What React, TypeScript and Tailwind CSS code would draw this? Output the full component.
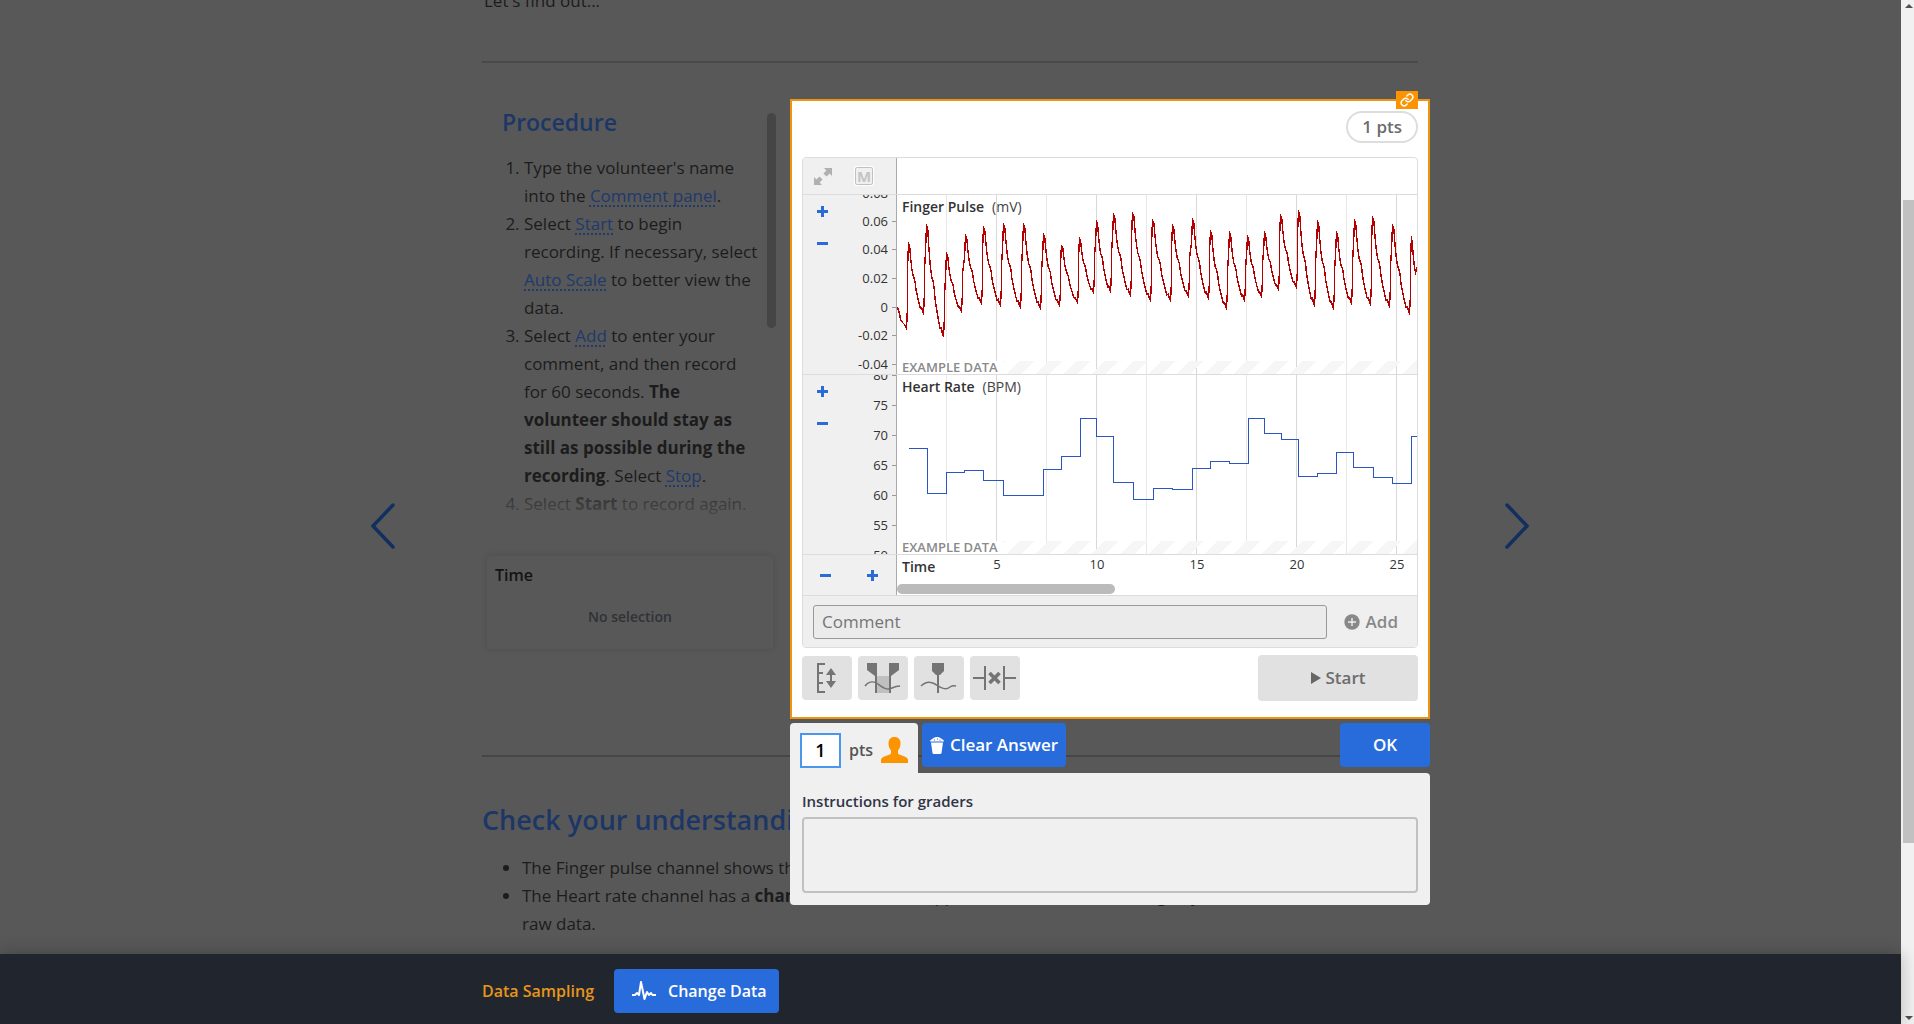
import { useState } from 'react'
import type { ReactNode } from 'react'
import { Link as LinkIcon } from 'lucide-react'

const PLOT_WIDTH = 521
const PLOT_HEIGHT = 179

// [trough x, trough y, peak x, peak y] for every heart beat
const BEATS = [
  [9, 133, 11, 48],
  [26, 118, 29, 30],
  [46, 141, 49, 58],
  [64, 116, 68, 40],
  [84, 108, 86, 32],
  [103, 110, 106, 29],
  [123, 112, 126, 29],
  [143, 113, 146, 39],
  [162, 110, 164, 50],
  [180, 107, 182, 43],
  [196, 97, 199, 26],
  [213, 96, 216, 19],
  [233, 100, 235, 18],
  [253, 105, 255, 25],
  [273, 105, 275, 30],
  [291, 101, 295, 24],
  [311, 103, 313, 36],
  [329, 113, 332, 37],
  [347, 105, 350, 41],
  [364, 101, 367, 37],
  [381, 94, 383, 20],
  [399, 92, 401, 16],
  [417, 110, 420, 26],
  [436, 113, 439, 37],
  [454, 108, 457, 25],
  [473, 109, 475, 22],
  [492, 111, 495, 30],
  [512, 118, 514, 41],
]

// Fall of one beat: share of the time and share of the drop
const DECAY = [
  [0.07, 0.02],
  [0.14, 0.2],
  [0.22, 0.36],
  [0.3, 0.46],
  [0.38, 0.5],
  [0.44, 0.55],
  [0.5, 0.66],
  [0.6, 0.76],
  [0.7, 0.85],
  [0.8, 0.93],
  [0.88, 0.92],
  [0.94, 0.98],
]

// [x, y] where each heart rate step begins
const RATE_STEPS = [
  [11, 73],
  [30, 118],
  [49, 97],
  [67, 95],
  [86, 105],
  [106, 120],
  [146, 94],
  [164, 81],
  [183, 43],
  [199, 61],
  [216, 107],
  [236, 124],
  [256, 113],
  [275, 114],
  [295, 93],
  [313, 86],
  [332, 88],
  [351, 43],
  [367, 58],
  [384, 64],
  [401, 101],
  [420, 98],
  [439, 77],
  [456, 92],
  [476, 102],
  [495, 108],
  [514, 61],
]

function pulsePath() {
  let d = 'M0 112 L2 118 L3 124 L5 127 L7 129 L8 131'
  BEATS.forEach(([tx, ty, px, py], i) => {
    const rise = ty - py
    d += ` L${tx} ${ty} L${tx + 1} ${ty - rise * 0.25} L${tx + 1} ${ty - rise * 0.5} L${px - 1} ${py + rise * 0.3} L${px} ${py}`
    const next = BEATS[i + 1]
    if (!next) return
    DECAY.forEach(([t, f]) => {
      d += ` L${px + (next[0] - px) * t} ${py + (next[1] - py) * f}`
    })
  })
  return d + ' L516 62 L517 72 L518 77 L519 74 L520 77'
}

function ratePath() {
  const [first, ...rest] = RATE_STEPS
  return `M${first[0]} ${first[1]}` + rest.map(([x, y]) => ` H${x} V${y}`).join('') + ` H${PLOT_WIDTH}`
}

function Term({ children }: { children: ReactNode }) {
  return (
    <a
      href="#"
      className="text-[#203a6c] underline decoration-dotted decoration-2 underline-offset-3 [text-decoration-skip-ink:none]"
    >
      {children}
    </a>
  )
}

function PlusMinus({ kind, label }: { kind: 'plus' | 'minus'; label: string }) {
  return (
    <button aria-label={label} className="block">
      <svg width="11" height="11" viewBox="0 0 11 11" fill="#2a6bd6">
        <rect x="0" y="4" width="11" height="3" />
        {kind === 'plus' && <rect x="4" y="0" width="3" height="11" />}
      </svg>
    </button>
  )
}

interface ChannelProps {
  title: string
  unit: string
  ticks: { label: string; y: number }[]
  path: string
  color: string
  strokeWidth: number
}

function Channel({ title, unit, ticks, path, color, strokeWidth }: ChannelProps) {
  return (
    <div className="flex h-[180px] border-b border-[#dcdcdc]">
      <div className="relative w-[94px] shrink-0 overflow-hidden border-r border-[#aaa] bg-[#f0f0f0]">
        <div className="flex flex-col gap-[21px] pt-[11px] pl-[14px]">
          <PlusMinus kind="plus" label={`Zoom in ${title}`} />
          <PlusMinus kind="minus" label={`Zoom out ${title}`} />
        </div>
        <svg className="absolute inset-y-0 right-0" width="93" height={PLOT_HEIGHT}>
          {ticks.map(({ label, y }) => (
            <g key={label}>
              <text x="85" y={y + 5} textAnchor="end" fontSize="13" fill="#333">
                {label}
              </text>
              <rect x="89" y={y} width="4" height="1" fill="#999" />
            </g>
          ))}
        </svg>
      </div>
      <div className="relative min-w-0 flex-1 overflow-hidden">
        <svg className="block" width={PLOT_WIDTH} height={PLOT_HEIGHT}>
          {[1, 2, 3, 4, 5, 6, 7, 8, 9, 10].map(n => (
            <rect key={n} x={n * 50 - 1} y="0" width="1" height={PLOT_HEIGHT} fill={n % 2 ? '#e8e8e8' : '#d8d8d8'} />
          ))}
          <path
            d={path}
            transform="translate(0.5 0.5)"
            fill="none"
            stroke={color}
            strokeWidth={strokeWidth}
            shapeRendering="crispEdges"
          />
        </svg>
        <div className="absolute top-0 left-[5px] flex gap-2 text-[14px] leading-6 text-[#444]">
          <span className="font-semibold text-[#333]">{title}</span>
          <span>{unit}</span>
        </div>
        <div className="absolute inset-x-0 bottom-0 flex h-[13px] items-center">
          <span className="bg-white px-[5px] text-[13px] leading-[13px] font-semibold text-[#8a8a8a]">EXAMPLE DATA</span>
          <span className="h-full flex-1 bg-[repeating-linear-gradient(-45deg,#f6f6f6_0_10px,transparent_10px_20px)]" />
        </div>
      </div>
    </div>
  )
}

function ToolButton({ label, children }: { label: string; children: ReactNode }) {
  return (
    <button aria-label={label} className="flex h-11 w-[50px] items-center justify-center rounded bg-[#e1e1e1]">
      <svg width="50" height="44" viewBox="0 0 50 44" fill="none" stroke="#747474" strokeWidth="2">
        {children}
      </svg>
    </button>
  )
}

function ChartPanel() {
  return (
    <div className="overflow-hidden rounded border border-[#dcdcdc] bg-white">
      <div className="flex h-[37px] border-b border-[#dcdcdc]">
        <div className="flex w-[94px] items-center gap-[23px] border-r border-[#aaa] bg-[#f0f0f0] pl-[11px]">
          <button aria-label="Expand">
            <svg width="18" height="17" viewBox="0 0 18 17" fill="#b0b0b0">
              <path d="M10 0h8v8l-2.400-2.400-3 3-3.200-3.200 3-3z" />
              <path d="M8 17H0V9l2.400 2.400 3-3 3.200 3.200-3 3z" />
            </svg>
          </button>
          <button
            aria-label="Markers"
            className="flex size-[18px] items-center justify-center rounded-[2px] border border-[#c0c0c0] text-[15px] leading-none font-bold text-[#c4c4c4] outline outline-white"
          >
            M
          </button>
        </div>
      </div>

      <Channel
        title="Finger Pulse"
        unit="(mV)"
        color="#b30000"
        strokeWidth={1.4}
        path={pulsePath()}
        ticks={[
          { label: '0.08', y: -2 },
          { label: '0.06', y: 26 },
          { label: '0.04', y: 54 },
          { label: '0.02', y: 83 },
          { label: '0', y: 112 },
          { label: '-0.02', y: 140 },
          { label: '-0.04', y: 169 },
        ]}
      />
      <Channel
        title="Heart Rate"
        unit="(BPM)"
        color="#2c55c4"
        strokeWidth={1}
        path={ratePath()}
        ticks={[
          { label: '80', y: 0 },
          { label: '75', y: 30 },
          { label: '70', y: 60 },
          { label: '65', y: 90 },
          { label: '60', y: 120 },
          { label: '55', y: 150 },
          { label: '50', y: 180 },
        ]}
      />

      <div className="flex h-[41px] border-b border-[#dcdcdc]">
        <div className="flex w-[94px] shrink-0 items-center gap-9 border-r border-[#aaa] bg-[#f0f0f0] pl-[17px]">
          <PlusMinus kind="minus" label="Zoom out time" />
          <PlusMinus kind="plus" label="Zoom in time" />
        </div>
        <div className="flex min-w-0 flex-1 flex-col justify-between overflow-hidden pb-px">
          <div className="flex">
            <span className="w-[75px] shrink-0 pl-[5px] text-[14px] leading-6 font-semibold text-[#333]">Time</span>
            {[5, 10, 15, 20, 25].map(t => (
              <span key={t} className="w-[100px] shrink-0 text-[13px] leading-[18px] text-[#333]">
                <span className="block w-[50px] text-center">{t}</span>
              </span>
            ))}
          </div>
          <div className="h-[10px] w-[218px] rounded-full bg-[#bbb]" />
        </div>
      </div>

      <div className="flex items-center gap-[17px] bg-[#efefef] pt-[9px] pr-[19px] pb-2 pl-[10px]">
        <input
          aria-label="Comment"
          placeholder="Comment"
          className="h-[34px] min-w-0 flex-1 rounded-[3px] border border-[#999] bg-[#ebebeb] px-2 pb-[2px] text-[17px] placeholder:text-[#757575]"
        />
        <button className="flex items-center gap-[6px] text-[17px] font-semibold text-[#888]">
          <svg width="16" height="16" viewBox="0 0 16 16">
            <circle cx="8" cy="8" r="7.700" fill="#888" />
            <path d="M8 4v8M4 8h8" stroke="#efefef" strokeWidth="1.400" />
          </svg>
          Add
        </button>
      </div>
    </div>
  )
}

function Toolbar() {
  return (
    <div className="mt-[7px] flex items-center gap-[6px]">
      <ToolButton label="Auto Scale">
        <path d="M23 8h-7v28h7M16 17h5M16 27h5" />
        <path d="M29 16v12" />
        <path d="M29 12l5 7H24zM29 32l5-7H24z" fill="#747474" stroke="none" />
      </ToolButton>
      <ToolButton label="Selection">
        <rect x="19" y="20" width="12" height="17" fill="#c0c0c0" stroke="none" />
        <path d="M9 7h10v13h-2l-8-6zM31 7h10v7l-8 6h-2z" fill="#747474" stroke="none" />
        <path d="M18 7v30M32 7v30" />
        <path d="M7 30c4-5 9-5 13-2s9 7 14 4q4-2 8-2" strokeWidth="1.500" />
      </ToolButton>
      <ToolButton label="Marker">
        <path d="M18 7h12v8l-4 4h-4l-4-4z" fill="#747474" stroke="none" />
        <path d="M24 18v19" />
        <path d="M7 30c5-5 9-5 14-2s10 7 15 3q3-2 6-1" strokeWidth="1.500" />
      </ToolButton>
      <ToolButton label="Delete selection">
        <path d="M15 10v24M34 10v24M3 22h12M34 22h12" />
        <path d="M19.500 17l10 10M29.500 17l-10 10" strokeWidth="3.600" />
      </ToolButton>
      <button className="ml-auto flex h-[46px] w-40 items-center justify-center gap-[5px] rounded bg-[#e1e1e1] pb-px text-[17px] font-semibold text-[#6c6c6c]">
        <svg width="10" height="12" viewBox="0 0 10 12" fill="#666">
          <path d="M0 0l10 6-10 6z" />
        </svg>
        Start
      </button>
    </div>
  )
}

function GradingPanel() {
  const [points, setPoints] = useState('1')

  return (
    <div className="absolute top-full -right-[2px] -left-[2px] mt-[6px]">
      <div className="flex items-start">
        <div className="flex h-[50px] w-32 items-center rounded-t bg-[#f0f0f0] pt-1 pl-[10px]">
          <input
            id="points"
            value={points}
            onChange={e => setPoints(e.target.value)}
            className="h-[35px] w-[41px] border-2 border-[#4a98ee] bg-white text-center text-[18px] font-semibold text-black outline-none"
          />
          <label htmlFor="points" className="pl-2 text-[16px] font-semibold text-[#555]">
            pts
          </label>
          <svg className="ml-2" width="27" height="26" viewBox="0 0 27 26" fill="#fb9400">
            <path d="M13.500 0c4 0 6 2.500 6 6.500 0 3-1 5-2.500 7v3c1 2 9 2.500 10 6V26H0v-3.500c1-3.500 9-4 10-6v-3c-1.500-2-2.500-4-2.500-7C7.500 2.500 9.500 0 13.500 0z" />
          </svg>
        </div>
        <button className="ml-1 flex h-11 w-36 items-center justify-center gap-[6px] rounded bg-[#286cdc] text-[17px] font-semibold text-white">
          <svg width="14" height="17" viewBox="0 0 14 17" fill="#fff">
            <path d="M1 5.500h12L11.500 16q-.2 1-1.200 1H3.700q-1 0-1.200-1z" />
            <path d="M0 4.500C0 2.500 2 2.500 3 1.500S5.500 0 7 0s3 .5 4 1.500 3 1 3 3z" />
            <path d="M4 3h1M7 2h1M9.500 3.200h1" stroke="#286cdc" />
          </svg>
          Clear Answer
        </button>
        <button className="ml-auto h-11 w-[90px] rounded bg-[#286cdc] text-[17px] font-semibold text-white">OK</button>
      </div>
      <div className="flex flex-col rounded-r rounded-bl bg-[#f0f0f0] px-3 pt-[18px] pb-3">
        <label htmlFor="instructions" className="text-[15px] leading-5 font-semibold text-[#2f3447]">
          Instructions for graders
        </label>
        <textarea
          id="instructions"
          className="mt-[6px] h-[76px] resize-none rounded border-2 border-[#c0c2c2] bg-[#f0f0f0] p-2 outline-none"
        />
      </div>
    </div>
  )
}

function Procedure() {
  return (
    <div className="pt-[7px]">
      <div className="flex justify-between pr-[14px]">
        <div className="relative pl-5">
          <h3 className="text-[23px] leading-8 font-semibold text-[#1c3766]">Procedure</h3>
          <ol className="mt-4 w-[256px] list-decimal pl-[22px]">
            <li>
              Type the volunteer's name into the <Term>Comment panel</Term>.
            </li>
            <li>
              Select <Term>Start</Term> to begin recording. If necessary, select <Term>Auto Scale</Term> to better view
              the data.
            </li>
            <li>
              Select <Term>Add</Term> to enter your comment, and then record for 60 seconds.{' '}
              <b>The volunteer should stay as still as possible during the recording</b>. Select <Term>Stop</Term>.
            </li>
            <li>
              Select <b>Start</b> to record again.
            </li>
          </ol>
          <div className="absolute inset-x-0 bottom-0 h-7 bg-linear-to-b from-[#585858]/30 to-[#585858]/75" />
        </div>
        <div className="mt-[7px] h-[215px] w-[9px] shrink-0 rounded-full bg-[#454545]" />
      </div>
      <div className="mt-[38px] mr-[17px] ml-[5px] h-[93px] rounded-sm px-2 pt-[5px] shadow-[0_0_7px_rgba(0,0,0,0.12)]">
        <div className="text-[16px] font-semibold text-[#141414]">Time</div>
        <div className="pt-[14px] text-center text-[14px] font-semibold text-[#303236]">No selection</div>
      </div>
    </div>
  )
}

function NavArrow({ label, d }: { label: string; d: string }) {
  return (
    <button aria-label={label} className="mt-[503px]">
      <svg width="24" height="46" viewBox="0 0 24 46" fill="none" stroke="#12305f" strokeWidth="3.500" strokeLinecap="round">
        <path d={d} />
      </svg>
    </button>
  )
}

export default function App() {
  return (
    <div className="flex h-screen overflow-hidden font-['Open_Sans',sans-serif]">
      <div className="flex min-w-0 flex-1 flex-col">
        <main className="flex min-h-0 flex-1 items-start justify-center gap-[87px] overflow-hidden bg-[#585858] pr-px text-[17px] leading-7 text-[#1c1c1c]">
          <NavArrow label="Previous" d="M22 2L2 23L22 44" />
          <div className="w-full max-w-[936px]">
            <p className="-mt-[13px] pl-[2px]">Let's find out...</p>
            <hr className="mt-[46px] border-t-2 border-[#494949]" />

            <section className="mt-9 -mr-3 grid grid-cols-[308px_minmax(0,1fr)]">
              <Procedure />
              <div className="relative border-2 border-[#ef9410] bg-white px-[10px] pt-[10px] pb-4">
                <div className="absolute -top-[10px] right-[10px] flex h-[18px] w-[22px] items-center justify-center bg-[#fb9400]">
                  <LinkIcon size={14} strokeWidth={2.5} color="#fff" />
                </div>
                <div className="flex justify-end">
                  <span className="flex h-8 items-center rounded-full border-2 border-[#ddd] px-[14px] text-[17px] font-semibold text-[#6c6c6c]">
                    1 pts
                  </span>
                </div>
                <div className="mt-[14px]">
                  <ChartPanel />
                </div>
                <Toolbar />
                <GradingPanel />
              </div>
            </section>

            <hr className="mt-9 border-t-2 border-[#464646]" />
            <h2 className="mt-[43px] text-[27px] leading-10 font-semibold text-[#1c3766]">Check your understanding</h2>
            <ul className="mt-[14px] list-disc pl-10">
              <li>The Finger pulse channel shows the raw data.</li>
              <li>
                The Heart rate channel has a <b>channel calculation</b> applied to calculate the average by beat
                intervals read in the raw data.
              </li>
            </ul>
          </div>
          <NavArrow label="Next" d="M2 2L22 23L2 44" />
        </main>

        <footer className="relative flex h-[70px] shrink-0 justify-center bg-[#21252d] pr-px text-[16px] font-semibold shadow-[0_0_16px_rgba(0,0,0,0.25)]">
          <div className="flex w-full max-w-[936px] items-center gap-5 pt-1">
            <span className="text-[#e6951c]">Data Sampling</span>
            <button className="flex h-11 items-center gap-3 rounded bg-[#286cdc] pr-3 pl-[18px] text-white">
              <svg width="24" height="20" viewBox="0 0 24 20" fill="none" stroke="#fff" strokeWidth="2" strokeLinejoin="round">
                <path d="M0 14h3l2-2 2 2L9 1l3.500 17L15 11l2 3 2-2 1.500 2H24" />
              </svg>
              Change Data
            </button>
          </div>
        </footer>
      </div>

      <div className="flex w-[13px] shrink-0 flex-col items-center overflow-hidden bg-[#f1f1f1] pb-1 pl-[2px]">
        <svg className="mt-1 mb-[192px] shrink-0" width="8" height="4" fill="#505050">
          <path d="M0 4h8L4 0z" />
        </svg>
        <div className="h-[643px] w-full shrink-0 bg-[#c1c1c1]" />
        <svg className="mt-auto shrink-0" width="8" height="4" fill="#505050">
          <path d="M0 0h8L4 4z" />
        </svg>
      </div>
    </div>
  )
}
